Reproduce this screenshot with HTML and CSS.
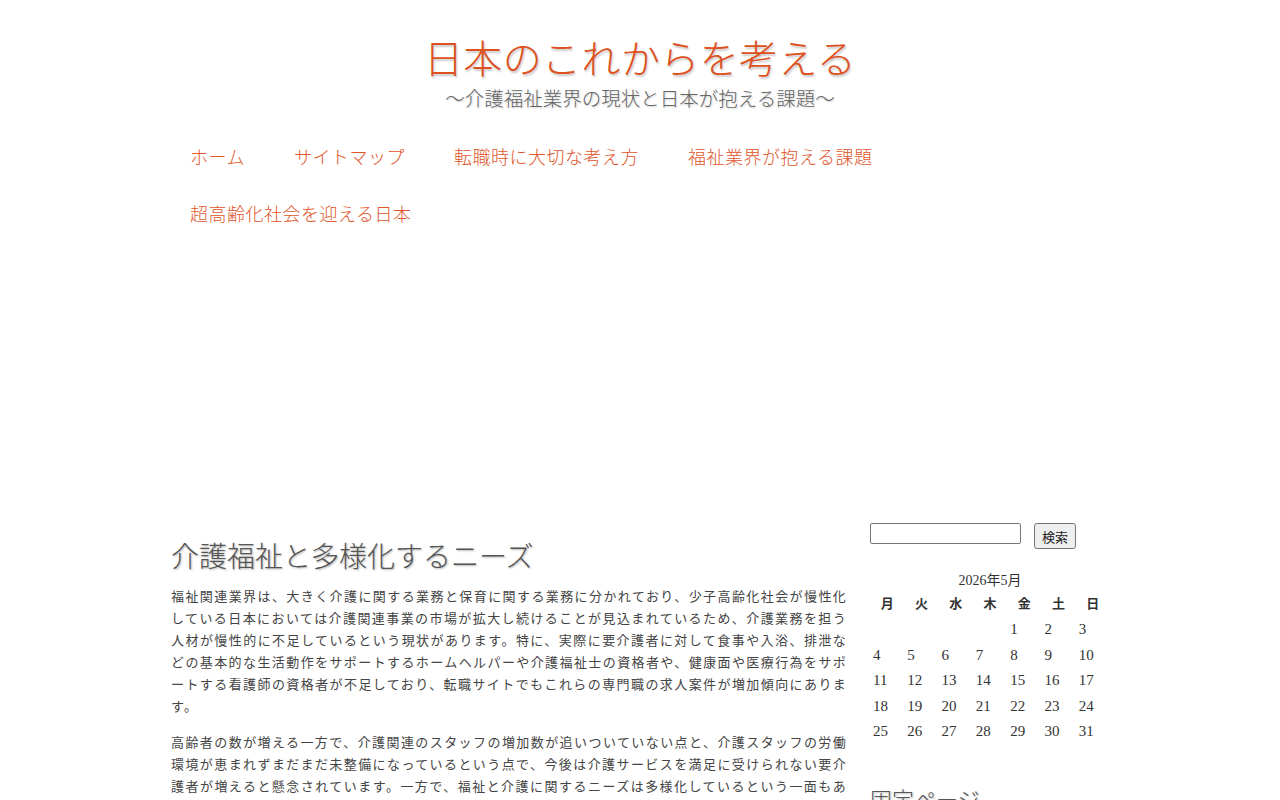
FILE: index.html
```html
<!DOCTYPE html>
<html lang="ja">
<head>
<meta charset="utf-8">
<title>日本のこれからを考える</title>
<link rel="stylesheet" href="styles.css">
</head>
<body>
<div class="wrap">
  <header class="site-header">
    <h1 class="site-title">日本のこれからを考える</h1>
    <p class="site-desc">〜介護福祉業界の現状と日本が抱える課題〜</p>
  </header>
  <nav class="gnav">
    <ul class="gnav-list">
      <li><a href="#">ホーム</a></li>
      <li><a href="#">サイトマップ</a></li>
      <li><a href="#">転職時に大切な考え方</a></li>
      <li><a href="#">福祉業界が抱える課題</a></li>
      <li><a href="#">超高齢化社会を迎える日本</a></li>
    </ul>
  </nav>
  <div class="ad-space"></div>
  <div class="content">
    <main class="main">
      <h2 class="entry-title">介護福祉と多様化するニーズ</h2>
      <p class="text">福祉関連業界は、大きく介護に関する業務と保育に関する業務に分かれており、少子高齢化社会が慢性化している日本においては介護関連事業の市場が拡大し続けることが見込まれているため、介護業務を担う人材が慢性的に不足しているという現状があります。特に、実際に要介護者に対して食事や入浴、排泄などの基本的な生活動作をサポートするホームヘルパーや介護福祉士の資格者や、健康面や医療行為をサポートする看護師の資格者が不足しており、転職サイトでもこれらの専門職の求人案件が増加傾向にあります。</p>
      <p class="text">高齢者の数が増える一方で、介護関連のスタッフの増加数が追いついていない点と、介護スタッフの労働環境が恵まれずまだまだ未整備になっているという点で、今後は介護サービスを満足に受けられない要介護者が増えると懸念されています。一方で、福祉と介護に関するニーズは多様化しているという一面もあり、保育においても女性が社会で活躍できる環境を整えるため、認可保育所の定員数を増やす取り組みが進められています。</p>
    </main>
    <aside class="side">
      <form class="search">
        <input class="search-input" type="text">
        <button class="search-btn" type="button">検索</button>
      </form>
      <table class="cal">
        <caption>2026年5月</caption>
        <thead>
          <tr><th>月</th><th>火</th><th>水</th><th>木</th><th>金</th><th>土</th><th>日</th></tr>
        </thead>
        <tbody>
          <tr><td></td><td></td><td></td><td></td><td>1</td><td>2</td><td>3</td></tr>
          <tr><td>4</td><td>5</td><td>6</td><td>7</td><td>8</td><td>9</td><td>10</td></tr>
          <tr><td>11</td><td>12</td><td>13</td><td>14</td><td>15</td><td>16</td><td>17</td></tr>
          <tr><td>18</td><td>19</td><td>20</td><td>21</td><td>22</td><td>23</td><td>24</td></tr>
          <tr><td>25</td><td>26</td><td>27</td><td>28</td><td>29</td><td>30</td><td>31</td></tr>
        </tbody>
      </table>
      <h3 class="widget-title">固定ページ</h3>
    </aside>
  </div>
</div>
</body>
</html>
```
FILE: styles.css
```css
html, body {
  margin: 0;
  padding: 0;
  background: #fff;
}
body {
  font-family: "Noto Sans CJK JP", "Noto Sans", sans-serif;
  color: #444;
}
.wrap {
  width: 940px;
  margin: 0 auto;
}
.site-header {
  text-align: center;
  padding-top: 33px;
}
.site-title {
  margin: 0;
  font-size: 39px;
  font-weight: 300;
  line-height: 46px;
  color: #dd5020;
  text-shadow: 1px 2px 2px rgba(0, 0, 0, 0.22);
  letter-spacing: 0.4px;
}
.site-desc {
  margin: 6px 0 0;
  font-size: 19.5px;
  font-weight: 300;
  line-height: 26px;
  color: #666;
  text-shadow: 1px 1px 2px rgba(0, 0, 0, 0.2);
}
.gnav {
  margin-top: 17px;
}
.gnav-list {
  list-style: none;
  margin: 0;
  padding: 0;
  display: flex;
  flex-wrap: wrap;
}
.gnav-list li a {
  display: block;
  padding: 17px 24px 18px 20px;
  margin-right: 5px;
  font-size: 18px;
  font-weight: 300;
  line-height: 22px;
  letter-spacing: 0.5px;
  color: #e0552a;
  text-decoration: none;
}
.ad-space {
  height: 277px;
}
.content {
  display: grid;
  grid-template-columns: 677px 240px;
  column-gap: 23px;
}
.main {
  padding-left: 1px;
}
.entry-title {
  margin: 16px 0 10px;
  font-size: 28px;
  font-weight: 300;
  line-height: 40px;
  color: #555;
  text-shadow: 1px 1px 2px rgba(0, 0, 0, 0.3);
}
.text {
  margin: 0 0 14px;
  font-size: 13px;
  line-height: 22px;
  letter-spacing: 1.2px;
  color: #444;
  text-align: justify;
  line-break: loose;
}
.search {
  display: flex;
  align-items: flex-start;
  gap: 13px;
  margin-top: 4px;
}
.search-input {
  width: 151px;
  height: 21px;
  box-sizing: border-box;
  border: 1px solid #767676;
  border-radius: 2px;
  padding: 1px 2px;
  margin: 0;
}
.search-btn {
  height: 26px;
  padding: 0 7px;
  margin: 0;
  font-family: "Noto Sans CJK JP", sans-serif;
  font-size: 13px;
  color: #222;
  background: #efefef;
  border: 1px solid #767676;
  border-radius: 3px;
}
.cal {
  width: 240px;
  margin-top: 22px;
  border-collapse: collapse;
  font-family: "Liberation Serif", "Noto Sans CJK JP", serif;
  font-size: 15px;
  color: #333;
}
.cal caption {
  font-size: 14px;
  line-height: 20px;
  color: #333;
}
.cal th {
  font-family: "Noto Sans CJK JP", sans-serif;
  font-weight: 700;
  font-size: 13px;
  line-height: 20px;
  padding: 2px 0 3px;
  text-align: center;
}
.cal td {
  height: 23.5px;
  padding: 2px 0 0 3px;
  text-align: left;
  vertical-align: middle;
}
.widget-title {
  margin: 38px 0 0;
  font-size: 22px;
  font-weight: 300;
  color: #555;
  text-shadow: 1px 1px 2px rgba(0, 0, 0, 0.3);
}
```
